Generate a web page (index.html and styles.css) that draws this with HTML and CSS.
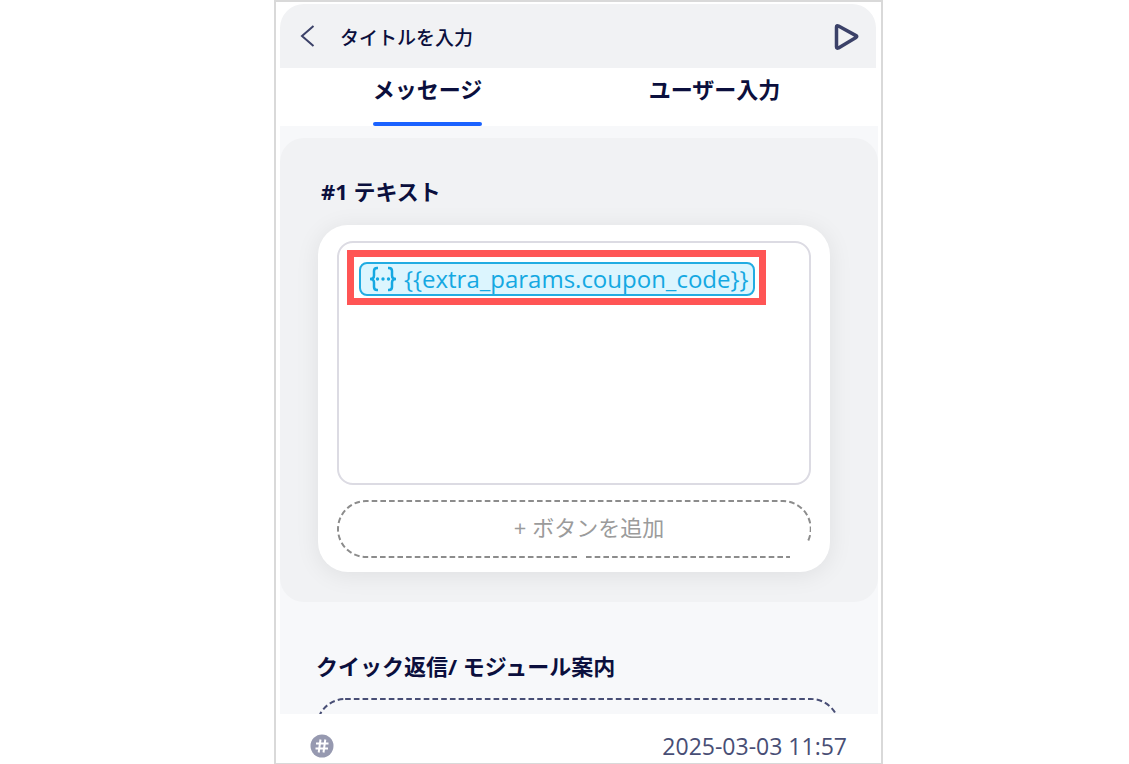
FILE: index.html
```
<!DOCTYPE html>
<html lang="ja">
<head>
  <meta charset="UTF-8">
  <meta name="viewport" content="width=device-width, initial-scale=1.0">
  <title>モジュール編集</title>
  <link rel="stylesheet" href="styles.css">
</head>
<body>

  <div class="panel">
    <header class="panel-header">
      <button class="icon-button" type="button" aria-label="戻る">
        <svg width="16" height="24" viewBox="0 0 16 24" fill="none" stroke="#3b4168" stroke-width="2">
          <path d="M13.500 2 L2 12 L13.500 22"/>
        </svg>
      </button>
      <input class="title-input" type="text" placeholder="タイトルを入力" aria-label="タイトル">
      <button class="icon-button" type="button" aria-label="再生">
        <svg width="26" height="28" viewBox="0 0 26 28" fill="none" stroke="#3b4168" stroke-width="3.500" stroke-linejoin="round">
          <path d="M2.500 5 Q2.500 3 4.500 4 L22 13.600 Q23.500 14.500 22 15.400 L4.500 26 Q2.500 26.800 2.500 24.800 Z"/>
        </svg>
      </button>
    </header>

    <nav class="tabs">
      <button class="tab active" type="button">メッセージ</button>
      <button class="tab" type="button">ユーザー入力</button>
    </nav>

    <main class="content">
      <section class="message">
        <h2>#1 テキスト</h2>
        <div class="card">
          <div class="editor" role="textbox" aria-multiline="true" aria-label="テキスト">
            <div class="highlight">
              <span class="param">
                <svg width="28" height="26" viewBox="0 0 28 26" fill="none" stroke="#14a8e2" stroke-width="2.500">
                  <path d="M9 2 H8 Q5 2 5 5 V9.500 Q5 13 1 13 Q5 13 5 16.500 V21 Q5 24 8 24 H9"/>
                  <path d="M19 2 H20 Q23 2 23 5 V9.500 Q23 13 27 13 Q23 13 23 16.500 V21 Q23 24 20 24 H19"/>
                  <path d="M8.500 13 h.01 M14 13 h.01 M19.500 13 h.01" stroke-width="3.400" stroke-linecap="round"/>
                </svg>
                <span>{{extra_params.coupon_code}}</span>
              </span>
            </div>
          </div>
          <button class="add-button" type="button">
            <svg class="outline" viewBox="0 0 474 58" preserveAspectRatio="none" fill="none" stroke="#8c8c8c" stroke-width="2" stroke-dasharray="5.600 3.100">
              <path d="M240 57 H29 A28 28 0 0 1 29 1 H445 A28 28 0 0 1 470 43"/>
              <path d="M249 57 H453"/>
            </svg>
            + ボタンを追加
          </button>
        </div>
      </section>

      <section class="quick-reply">
        <h2>クイック返信/ モジュール案内</h2>
        <button class="quick-button" type="button" aria-label="クイック返信を追加">
          <svg class="outline" viewBox="0 0 522 58" preserveAspectRatio="none" fill="none" stroke="#484e75" stroke-width="2" stroke-dasharray="5.600 3.100">
            <rect x="1" y="1" width="520" height="56" rx="28"/>
          </svg>
        </button>
      </section>
    </main>

    <footer class="panel-footer">
      <svg width="24" height="24" viewBox="0 0 24 24" fill="none">
        <circle cx="12" cy="12" r="11.500" fill="#9699b0"/>
        <path d="M10.500 5.500 L8.700 18.500 M15.300 5.500 L13.500 18.500 M6 9.500 H18.500 M5.500 14.500 H18" stroke="#fff" stroke-width="2"/>
      </svg>
      <time datetime="2025-03-03T11:57">2025-03-03 11:57</time>
    </footer>
  </div>

</body>
</html>
```
FILE: styles.css
```
* {
  box-sizing: border-box;
}
body {
  margin: 0;
  padding-left: 28px;
  display: flex;
  justify-content: center;
  background-color: #fff;
  color: #0b0f3d;
  font-family: "Open Sans", "Noto Sans CJK JP", sans-serif;
}
button {
  font-family: inherit;
  border: none;
  background: none;
  padding: 0;
  color: inherit;
  cursor: pointer;
}
.panel {
  display: flex;
  flex-direction: column;
  width: 100%;
  max-width: 609px;
  height: 100vh;
  border: 2px solid #d9d9d9;
  border-bottom-width: 1px;
  padding: 2px 3px 0 4px;
}
.panel-header {
  display: flex;
  align-items: center;
  height: 64px;
  flex-shrink: 0;
  margin-right: 2px;
  padding: 0 16px 0 20px;
  background-color: #f1f2f4;
  border-radius: 24px 24px 0 0;
}
.icon-button svg {
  display: block;
}
.title-input {
  flex: 1;
  min-width: 0;
  margin-left: 24px;
  padding: 4px 0 0;
  border: none;
  background: none;
  font-family: inherit;
  font-size: 19px;
  font-weight: 500;
  color: #0b0f3d;
}
.title-input::placeholder {
  color: #0b0f3d;
  opacity: 1;
}
.tabs {
  display: grid;
  grid-template-columns: 1fr 1fr;
  justify-items: center;
  height: 58px;
  flex-shrink: 0;
  padding: 0 20px 0 4px;
}
.tab {
  position: relative;
  padding-bottom: 18px;
  font-size: 22px;
  font-weight: 700;
}
.tab.active::after {
  content: "";
  position: absolute;
  left: 0;
  right: 0;
  bottom: 0;
  height: 4px;
  border-radius: 2px;
  background-color: #1a62ff;
}
.content {
  flex: 1;
  min-height: 0;
  overflow: hidden;
  padding-top: 12px;
  background-color: #f7f8fa;
}
h2 {
  margin: 0;
  font-size: 22px;
  line-height: 32px;
  font-weight: 700;
}
.message {
  padding: 37px 48px 30px 38px;
  background-color: #f1f2f4;
  border-radius: 24px;
}
.message h2 {
  padding-left: 3px;
  margin-bottom: 18px;
}
.card {
  padding: 16px 19px 14px;
  background-color: #fff;
  border-radius: 30px;
  box-shadow: 0 3px 24px rgba(0, 0, 0, 0.08);
}
.editor {
  height: 244px;
  margin-bottom: 15px;
  padding: 7px 8px;
  border: 2px solid #dcdbe3;
  border-radius: 16px;
}
.highlight {
  display: inline-block;
  padding: 5px 4px 2px 5px;
  border: 7px solid #ff5555;
}
.param {
  display: flex;
  align-items: center;
  gap: 7px;
  height: 34px;
  padding: 0 5px 0 8px;
  border: 2px solid #22ace2;
  border-radius: 8px;
  background-color: #dcf5fe;
  color: #14a8e2;
  font-size: 24px;
  line-height: 30px;
}
.add-button {
  position: relative;
  display: block;
  width: 100%;
  height: 58px;
  padding: 0 0 6px 30px;
  font-size: 22px;
  color: #9b9b9b;
}
.outline {
  position: absolute;
  inset: 0;
  width: 100%;
  height: 100%;
}
.quick-reply {
  padding: 48px 38px 0 36px;
}
.quick-button {
  position: relative;
  display: block;
  width: 100%;
  height: 58px;
  margin-top: 16px;
}
.panel-footer {
  display: flex;
  align-items: center;
  justify-content: space-between;
  height: 49px;
  flex-shrink: 0;
  padding: 14px 31px 0 30px;
  font-size: 23px;
  line-height: 32px;
  color: #484e75;
}
```
